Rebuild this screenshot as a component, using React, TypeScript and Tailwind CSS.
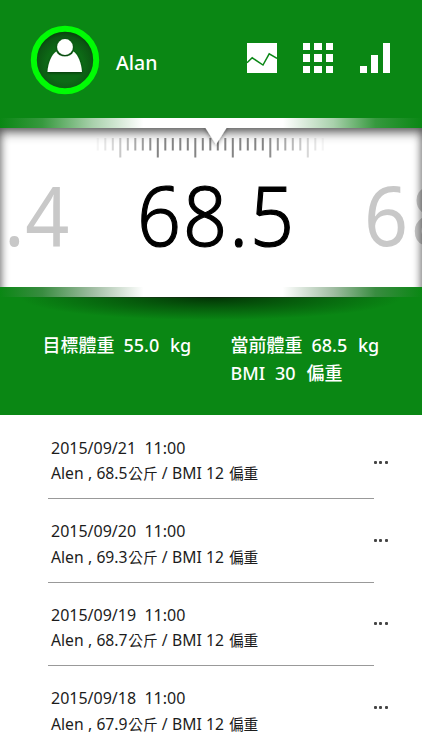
import type { ReactNode } from 'react'

interface WeightRecord {
  id: number
  date: string
  time: string
  weight: string
}

const records: WeightRecord[] = [
  { id: 1, date: '2015/09/21', time: '11:00', weight: '68.5' },
  { id: 2, date: '2015/09/20', time: '11:00', weight: '69.3' },
  { id: 3, date: '2015/09/19', time: '11:00', weight: '68.7' },
  { id: 4, date: '2015/09/18', time: '11:00', weight: '67.9' },
]

const TICK_COUNT = 31

function Avatar() {
  return (
    <svg viewBox="0 0 70 70" className="h-[70px] w-[70px]">
      <defs>
        <radialGradient id="avatar-bg" cx="50%" cy="56%" r="52%">
          <stop offset="0.55" stopColor="#0d6a16" />
          <stop offset="0.85" stopColor="#0c5613" />
          <stop offset="1" stopColor="#07400b" />
        </radialGradient>
        <filter id="avatar-shadow" x="-20%" y="-20%" width="140%" height="140%">
          <feDropShadow dx="0" dy="1" stdDeviation="1.5" floodColor="#000" floodOpacity="0.5" />
        </filter>
      </defs>
      <circle cx="35" cy="35" r="31.2" fill="url(#avatar-bg)" stroke="#00fc04" strokeWidth="6" />
      <g filter="url(#avatar-shadow)">
        <path
          d="M26.2 26.6 C21.5 30 18.2 37.5 17.5 47 H52 C51.3 37.5 48 30 43.6 26.6 C42 30 39 31.6 34.9 31.6 C30.8 31.6 27.8 30 26.2 26.6Z"
          fill="#fff"
        />
        <circle cx="35" cy="22" r="7.9" fill="#fff" />
      </g>
    </svg>
  )
}

function ChartIcon() {
  return (
    <svg viewBox="0 0 30 30" className="h-[30px] w-[30px]">
      <rect width="30" height="30" fill="#fff" />
      <path d="M0 19.8 L5.2 14.8 L16 22 L22.2 10.8 L30 15.4" fill="none" stroke="#0a8716" strokeWidth="1.5" />
    </svg>
  )
}

function GridIcon() {
  return (
    <div className="grid h-[30px] w-[30px] grid-cols-3 gap-1">
      {Array.from({ length: 9 }, (_, i) => (
        <span key={i} className="bg-white" />
      ))}
    </div>
  )
}

function BarsIcon() {
  return (
    <div className="flex h-[30px] w-[30px] items-end justify-between">
      <span className="h-[7px] w-[7px] bg-white" />
      <span className="h-[18px] w-[7px] bg-white" />
      <span className="h-[30px] w-[7px] bg-white" />
    </div>
  )
}

function Ruler() {
  return (
    <svg viewBox="0 0 422 32" className="absolute top-0 left-0 h-8 w-[422px]">
      <defs>
        <filter id="pointer-shadow" x="-50%" y="-50%" width="200%" height="200%">
          <feDropShadow dx="0" dy="1" stdDeviation="2" floodColor="#000" floodOpacity="0.5" />
        </filter>
      </defs>
      {Array.from({ length: TICK_COUNT }, (_, i) => {
        const edge = Math.min(i, TICK_COUNT - 1 - i)
        return (
          <rect
            key={i}
            x={96.8 + i * 7.5}
            y={10}
            width={2}
            height={i % 5 === 3 ? 19.5 : 12.5}
            fill="#6e6e6e"
            opacity={Math.min(0.85, 0.08 + edge * 0.1)}
          />
        )
      })}
      <path d="M205.5 -2 V0 L216 16.5 L226.5 0 V-2Z" fill="#fff" filter="url(#pointer-shadow)" />
    </svg>
  )
}

function Scale() {
  return (
    <div className="relative h-[159px] overflow-hidden bg-white">
      <span className="absolute top-[29px] left-[3.5px] origin-left scale-x-93 text-[83px] leading-[114px] tracking-[0.5px] whitespace-nowrap text-[#c8c8c8]">
        .4
      </span>
      <span className="absolute top-[29px] left-[137px] origin-left scale-x-93 text-[83px] leading-[114px] font-light tracking-[2.2px] whitespace-nowrap text-black [-webkit-text-stroke:1.2px_black]">
        68.5
      </span>
      <span className="absolute top-[29px] left-[363.5px] origin-left scale-x-93 text-[83px] leading-[114px] tracking-[3px] whitespace-nowrap text-[#c8c8c8]">
        68
      </span>
      <div className="absolute inset-x-0 top-0 -bottom-5 shadow-[inset_0_0_9px_1px_rgba(0,0,0,0.45),inset_0_8px_11px_-3px_rgba(0,0,0,0.45)]" />
      <Ruler />
    </div>
  )
}

function Cjk({ children }: { children: ReactNode }) {
  return <span className="pl-[0.7px] text-[14.7px]">{children}</span>
}

function RecordRow({ record, first }: { record: WeightRecord; first: boolean }) {
  return (
    <li className="group flex h-[83.6px] shrink-0">
      <div className="h-full w-[326px] border-b border-[#999] pt-[20px] pl-[3.5px] text-[16px] leading-[25.5px] whitespace-pre text-[#1c1c1c] group-last:border-b-0">
        <p>
          {record.date}
          {'  '}
          {record.time}
        </p>
        <p className="text-[15.7px] [word-spacing:0.2px]">
          Alen , {record.weight}
          <Cjk>公斤</Cjk> / BMI 12 <Cjk>偏重</Cjk>
        </p>
      </div>
      <button type="button" className={first ? 'flex h-fit gap-[2.5px] pt-[45.5px]' : 'flex h-fit gap-[2.5px] pt-[39.5px]'}>
        <i className="h-[3px] w-[3px] rounded-[1px] bg-[#444]" />
        <i className="h-[3px] w-[3px] rounded-[1px] bg-[#444]" />
        <i className="h-[3px] w-[3px] rounded-[1px] bg-[#444]" />
      </button>
    </li>
  )
}

export default function App() {
  return (
    <div className="flex h-[750px] w-[422px] flex-col overflow-hidden bg-white font-['Noto_Sans','Noto_Sans_CJK_TC',sans-serif]">
      <header className="flex h-[118px] shrink-0 bg-[#0a8714] pl-[30px]">
        <div className="pt-[24.5px]">
          <Avatar />
        </div>
        <h1 className="w-[146.5px] pt-[49px] pl-4 text-[19.5px] leading-7 font-medium text-white">Alan</h1>
        <nav className="flex gap-[26.5px] pt-[43px]">
          <ChartIcon />
          <GridIcon />
          <BarsIcon />
        </nav>
      </header>

      <div className="h-[10px] shrink-0 bg-[linear-gradient(90deg,#0a8714_0%,#36993e_10%,#a9d1ac_22%,#fff_34%,#fff_67%,#a9d1ac_79%,#36993e_89%,#0a8714_100%)]" />
      <Scale />
      <div className="h-[10px] shrink-0 bg-[linear-gradient(90deg,#0a8714_0%,#398c40_10%,#a0bda2_22%,#fff_34%,#fff_67%,#a0bda2_79%,#398c40_89%,#0a8714_100%)]" />
      <div className="h-px shrink-0 bg-[linear-gradient(90deg,#0a8714_5%,#123d14_35%,#0c240d_50%,#123d14_65%,#0a8714_95%)]" />

      <section className="flex h-[117px] shrink-0 bg-[#0a8714] bg-[radial-gradient(ellipse_190px_22px_at_50%_0,#033606_0%,#065c0c_45%,#0a8714_100%)] pt-[33px] pl-[42.5px] text-[18px] leading-7 font-medium whitespace-pre text-white">
        <p className="flex w-[188px]">
          <span className="w-[81px]">目標體重</span>
          <span className="w-[46.5px]">55.0</span>
          <span>kg</span>
        </p>
        <div>
          <p className="flex">
            <span className="w-[81px]">當前體重</span>
            <span className="w-[46.5px]">68.5</span>
            <span>kg</span>
          </p>
          <p className="flex">
            <span className="w-[44.5px]">BMI</span>
            <span className="w-[31.5px]">30</span>
            <span>偏重</span>
          </p>
        </div>
      </section>

      <ul className="flex flex-col pt-[0.9px] pl-[47.5px]">
        {records.map((record, i) => (
          <RecordRow key={record.id} record={record} first={i === 0} />
        ))}
      </ul>
    </div>
  )
}
